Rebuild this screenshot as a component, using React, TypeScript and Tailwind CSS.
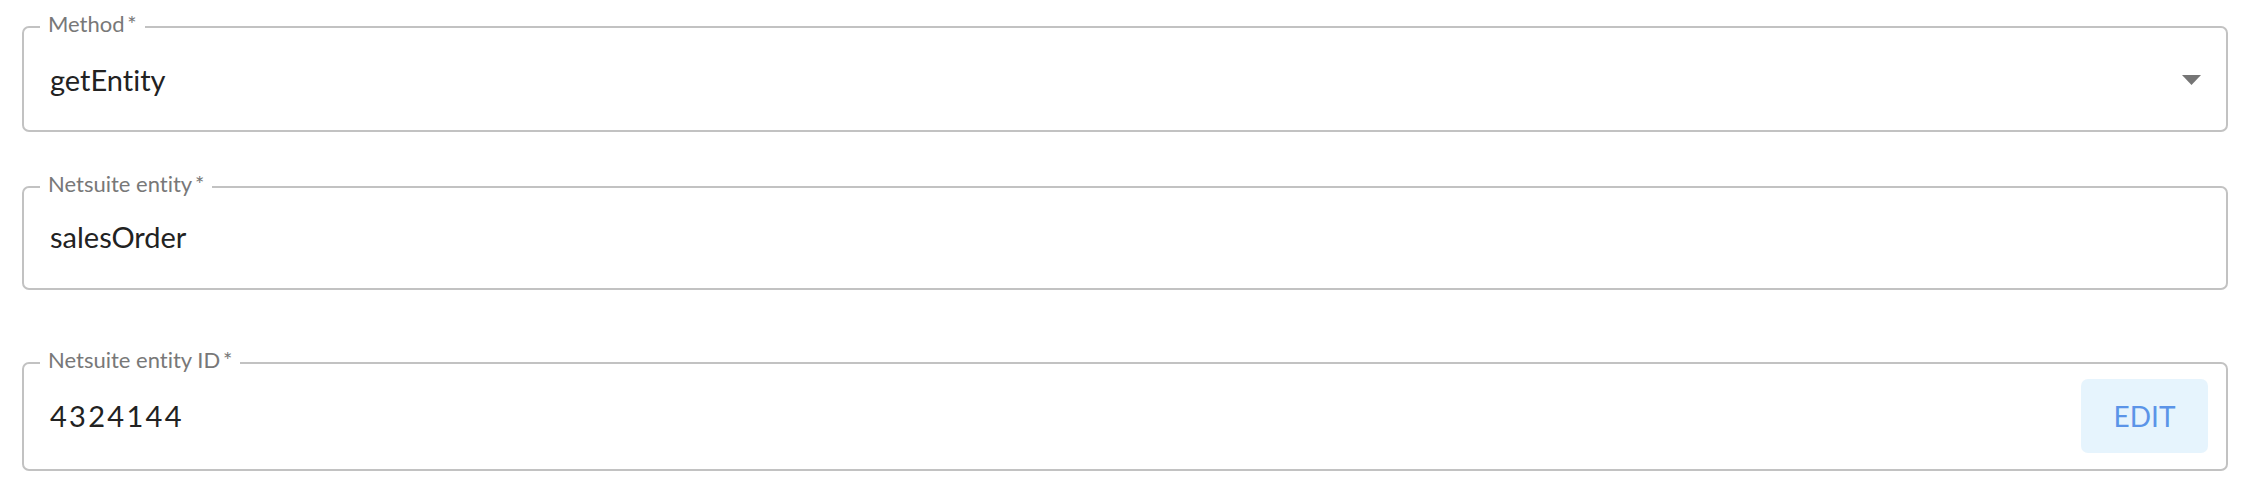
import React, { useState } from 'react';

interface FieldProps {
 label: string;
 boxClass: string; // spacing for the content row
 children: React.ReactNode;
}

const OutlinedField: React.FC<FieldProps> = ({ label, boxClass, children }) => {
 return (
  <fieldset className="m-0 min-w-0 rounded-[7px] border-2 border-[#c2c2c2] px-[16px]">
   <legend className="px-[8px] text-[22px] leading-[20px] text-[#787878]">
    <span className="relative -top-[3px]">{label}{'\u2009*'}</span>
   </legend>
   <div className={`flex items-center justify-between pl-[10px] ${boxClass}`}>{children}</div>
  </fieldset>
 );
};

const App: React.FC = () => {
 const [method] = useState('getEntity');
 const [entity] = useState('salesOrder');
 const [entityId] = useState('4324144');

 return (
  <div className="min-h-screen w-full bg-white pl-[22px] pr-[26px] pt-[17px] font-['Lato',sans-serif] [font-variant-ligatures:none]">
   <OutlinedField label="Method" boxClass="pt-[27px] pb-[34px] pr-[9px]">
    <span className="text-[29px] leading-[32px] text-[#222222]">{method}</span>
    <svg width="19" height="10" viewBox="0 0 19 10" className="relative top-[0px]">
     <polygon points="0,0 19,0 9.5,10" fill="#757575" />
    </svg>
   </OutlinedField>

   <div className="mt-[45px]">
    <OutlinedField label="Netsuite entity" boxClass="pt-[24px] pb-[35px] pr-[9px]">
     <span className="text-[29px] leading-[32px] text-[#222222]">{entity}</span>
    </OutlinedField>
   </div>

   <div className="mt-[63px]">
    <OutlinedField label="Netsuite entity ID" boxClass="pt-[6px] pb-[16px] pr-[2px]">
     <span className="text-[29px] leading-[34px] tracking-[2.3px] text-[#222222]">{entityId}</span>
     <button
      type="button"
      className="flex h-[74px] w-[127px] items-center justify-center rounded-[7px] bg-[#e6f4fd] text-[28px] text-[#5b94e8]"
     >
      EDIT
     </button>
    </OutlinedField>
   </div>
  </div>
 );
};

export default App;
